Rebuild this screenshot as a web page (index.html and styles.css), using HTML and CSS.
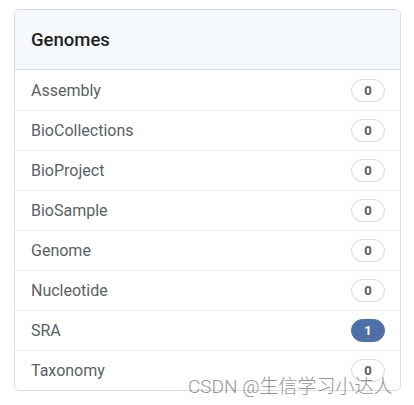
FILE: index.html
```html
<!DOCTYPE html>
<html>
<head>
<meta charset="utf-8">
<link rel="stylesheet" href="styles.css">
</head>
<body>
<div class="card">
  <div class="card-header">Genomes</div>
  <ul class="list">
    <li class="item"><span>Assembly</span><span class="badge">0</span></li>
    <li class="item"><span>BioCollections</span><span class="badge">0</span></li>
    <li class="item"><span>BioProject</span><span class="badge">0</span></li>
    <li class="item"><span>BioSample</span><span class="badge">0</span></li>
    <li class="item"><span>Genome</span><span class="badge">0</span></li>
    <li class="item"><span>Nucleotide</span><span class="badge">0</span></li>
    <li class="item"><span>SRA</span><span class="badge badge-active">1</span></li>
    <li class="item"><span>Taxonomy</span><span class="badge">0</span></li>
  </ul>
</div>
<div class="watermark">CSDN @生信学习小达人</div>
</body>
</html>
```
FILE: styles.css
```css
html, body {
  margin: 0;
  padding: 0;
  background: #fff;
}
body {
  font-family: Roboto, "Noto Sans CJK SC", sans-serif;
  position: relative;
  width: 414px;
  height: 405px;
  padding: 9px 0 0 14px;
  box-sizing: border-box;
}
.card {
  width: 387px;
  border: 1px solid #d8dde3;
  border-radius: 5px;
  overflow: hidden;
  box-sizing: border-box;
}
.card-header {
  height: 59px;
  background: #f5f9fd;
  border-bottom: 1px solid #d8dde3;
  display: flex;
  align-items: center;
  padding-left: 16px;
  font-size: 18.5px;
  font-weight: 500;
  color: #222;
}
.list {
  list-style: none;
  margin: 0;
  padding: 0;
}
.item {
  height: 40px;
  box-sizing: border-box;
  border-top: 1px solid #ebedef;
  display: flex;
  align-items: center;
  justify-content: space-between;
  padding: 0 15px 0 16px;
  font-size: 16px;
  color: #5a5f66;
}
.item:first-child {
  border-top: none;
}
.badge {
  width: 34px;
  height: 23px;
  box-sizing: border-box;
  border: 1px solid #d6d8da;
  border-radius: 12px;
  display: flex;
  align-items: center;
  justify-content: center;
  font-size: 13px;
  font-weight: 700;
  color: #555a60;
  background: #fff;
}
.badge-active {
  background: #4f70a6;
  border-color: #4f70a6;
  color: #fff;
}
.watermark {
  position: absolute;
  left: 188px;
  top: 371px;
  font-size: 19px;
  font-weight: 300;
  color: #8a8a8a;
  opacity: 0.9;
  white-space: nowrap;
}
```
